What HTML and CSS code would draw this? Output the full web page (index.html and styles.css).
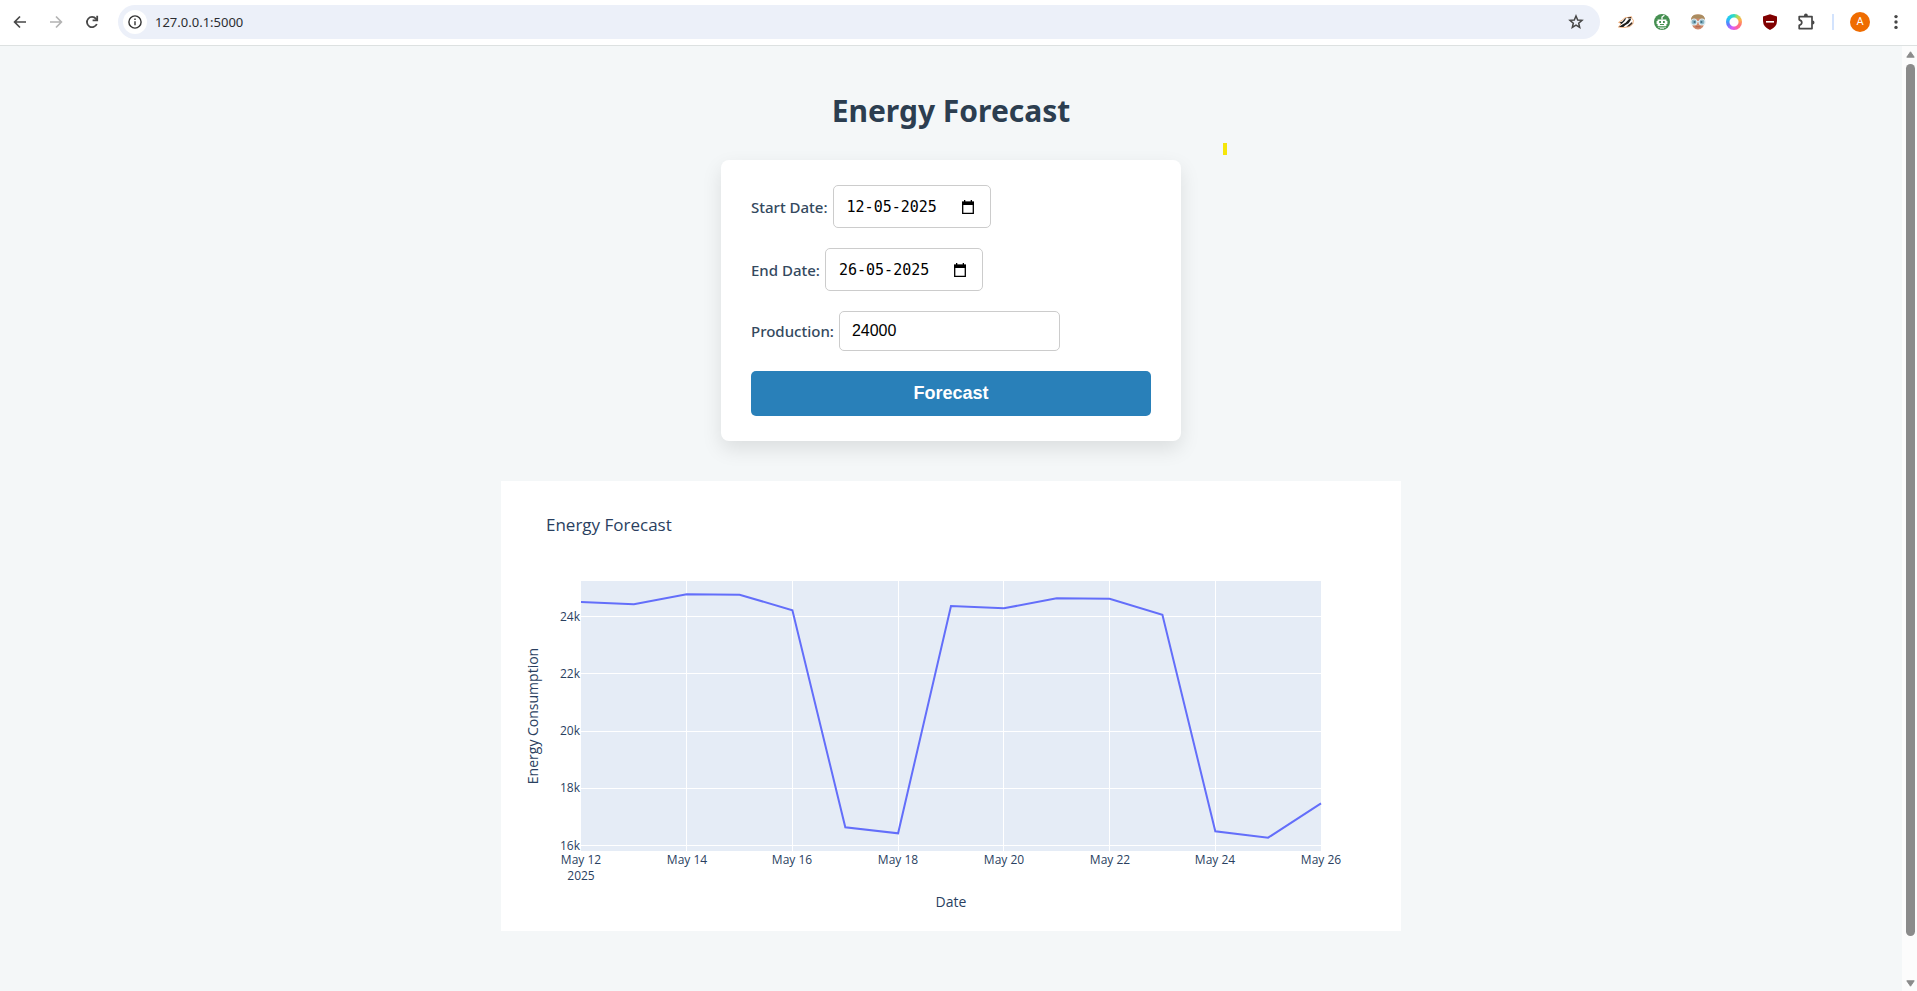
FILE: index.html
```html
<!DOCTYPE html>
<html lang="en">
<head>
<meta charset="utf-8">
<title>Energy Forecast</title>
<link rel="stylesheet" href="styles.css">
</head>
<body>
<header class="toolbar">
  <nav class="tools" aria-label="Navigation">
    <button class="tool" aria-label="Back"><svg width="16" height="16" viewBox="0 0 16 16" fill="none" stroke="#474747" stroke-width="1.7"><path d="M14 8H3M8 2.5L2.6 8L8 13.5"/></svg></button>
    <button class="tool" aria-label="Forward"><svg width="16" height="16" viewBox="0 0 16 16" fill="none" stroke="#b3b3b3" stroke-width="1.7"><path d="M2 8H13M8 2.5L13.4 8L8 13.5"/></svg></button>
    <button class="tool" aria-label="Reload"><svg width="16" height="16" viewBox="0 0 16 16" fill="none" stroke="#474747" stroke-width="1.8"><path d="M12.8 10A5.1 5.1 0 1 1 12 4.8L13 6"/><path d="M13.2 1.8V6.4H8.6"/></svg></button>
  </nav>
  <div class="omnibox">
    <button class="site-info" aria-label="Site information"><svg width="16" height="16" viewBox="0 0 16 16" fill="none" stroke="#333" stroke-width="1.4"><circle cx="8" cy="8" r="6.1"/><path d="M8 7.2V11.3M8 4.5V6"/></svg></button>
    <input class="address" type="text" value="127.0.0.1:5000" aria-label="Address">
    <button class="star" aria-label="Bookmark this page"><svg width="16" height="16" viewBox="0 0 16 16" fill="none" stroke="#474747" stroke-width="1.5"><path d="M8 2L9.7 6L14 6.3L10.7 9.2L11.7 13.5L8 11.2L4.3 13.5L5.3 9.2L2 6.3L6.3 6Z"/></svg></button>
  </div>
  <div class="tools">
    <button class="tool" aria-label="Privacy Badger"><svg width="16" height="16" viewBox="0 0 16 16"><path d="M.6 8.4L4.6 5.8L7.6 3.4L9.4 3.6L13.4 2.6L14 4.6L15.4 6.4L14.8 10L11.6 12.6L7 13.4L.4 13.2L3.4 9.4Z" fill="#fff" stroke="#f0a060" stroke-width=".8"/><path d="M1.6 8.6L4.4 7.4L7 4.4L8.4 4L6.6 7L3.6 10Z" fill="#1d1d1b"/><path d="M.8 12.9L4 10.8L7.6 8.8L10.6 5.6L12.4 4.6L13 5.8L10.6 9.2L7.2 11.2L5.4 13Z" fill="#1d1d1b"/><path d="M9 3.6L13 3L13.4 4.2L10.6 4.6ZM11 10.4L14 8L14.4 9.8L11.4 12.2L8.4 12.8Z" fill="#3a2a20"/></svg></button>
    <button class="tool" aria-label="Robot extension"><svg width="16" height="16" viewBox="0 0 16 16"><circle cx="8" cy="8" r="8" fill="#469052"/><path d="M8 5.6V3L10.4 1.2" fill="none" stroke="#fff" stroke-width="1.3"/><path d="M3.6 5.4H12.4V7H13.4V10H12.4V12H3.6V10H2.6V7H3.6Z" fill="#fff"/><path d="M5.2 7H7V9H5.2ZM9 7H10.8V9H9ZM6 10H10V11H6Z" fill="#469052"/><path d="M4 13.2H12M6 14.6H10" stroke="#d5ead8" stroke-width=".9"/></svg></button>
    <button class="tool" aria-label="Reader extension"><svg width="16" height="16" viewBox="0 0 16 16"><path d="M1 7Q1 0 8 .4Q15 0 15 7L13 13Q8 18 3 13Z" fill="#d0896a"/><path d="M1 6.3Q1 0 8 .4Q15 0 15 6.3L12 4.4H4Z" fill="#aa8c60"/><path d="M5.5 12.8H10.5" stroke="#a9604c" stroke-width="1"/><g fill="#8fb9c8" stroke="#dcebf1" stroke-width="1.2"><circle cx="4" cy="8" r="3"/><circle cx="12" cy="8" r="3"/></g><path d="M6.8 7.6H9.2" stroke="#dcebf1" stroke-width="1.2"/><circle cx="4.6" cy="8" r="1.1" fill="#3d6b80"/><circle cx="11.4" cy="8" r="1.1" fill="#3d6b80"/></svg></button>
    <button class="tool" aria-label="Color wheel extension"><span class="wheel"></span></button>
    <button class="tool" aria-label="Content blocker"><svg width="16" height="16" viewBox="0 0 16 16"><path d="M8 .3L15 2.5V7Q15 13 8 15.9Q1 13 1 7V2.5Z" fill="#800000"/><path d="M4 7.8H12" stroke="#fff" stroke-width="1.6"/></svg></button>
    <button class="tool" aria-label="Extensions"><svg width="18" height="18" viewBox="0 0 18 18"><path d="M2.2 3.6H15V15.6H2.2V12.4Q4.8 11.8 4.8 9.6Q4.8 7.4 2.2 6.8Z" fill="none" stroke="#474747" stroke-width="1.7" stroke-linejoin="round"/><path d="M7 3.2V2.4A1.9 1.9 0 0 1 10.8 2.4V3.2ZM15.2 7.6H15.6A1.9 1.9 0 0 1 15.6 11.4H15.2Z" fill="#474747"/></svg></button>
    <span class="divider"></span>
    <button class="tool" aria-label="Profile"><span class="avatar">A</span></button>
    <button class="tool" aria-label="Menu"><svg width="16" height="16" viewBox="0 0 16 16" fill="#474747"><circle cx="8" cy="2.6" r="1.7"/><circle cx="8" cy="8" r="1.7"/><circle cx="8" cy="13.4" r="1.7"/></svg></button>
  </div>
</header>
<div class="viewport">
  <main class="page">
    <h1 class="title">Energy Forecast</h1>
    <form class="card">
      <div class="field">
        <label for="start">Start Date:</label>
        <span class="date">
          <input id="start" type="text" value="12-05-2025">
          <button type="button" class="picker" aria-label="Pick start date"><svg width="14" height="14" viewBox="0 0 14 14"><path d="M1.7 2.5H12.3V13.3H1.7Z" fill="none" stroke="#000" stroke-width="1.3"/><path d="M1 1.5H13V5H1ZM3 0H4.3V2H3ZM9.7 0H11V2H9.7Z"/></svg></button>
        </span>
      </div>
      <div class="field">
        <label for="end">End Date:</label>
        <span class="date">
          <input id="end" type="text" value="26-05-2025">
          <button type="button" class="picker" aria-label="Pick end date"><svg width="14" height="14" viewBox="0 0 14 14"><path d="M1.7 2.5H12.3V13.3H1.7Z" fill="none" stroke="#000" stroke-width="1.3"/><path d="M1 1.5H13V5H1ZM3 0H4.3V2H3ZM9.7 0H11V2H9.7Z"/></svg></button>
        </span>
      </div>
      <div class="field">
        <label for="production">Production:</label>
        <input id="production" class="number" type="text" inputmode="numeric" value="24000">
      </div>
      <button type="button" class="submit">Forecast</button>
    </form>
    <section class="chart">
      <svg class="plot" viewBox="0 0 900 450" role="img" aria-label="Energy Forecast chart">
        <rect x="80" y="100" width="740" height="270" fill="#e5ecf6"/>
        <path class="grid" d="M185.5 100V370M291.5 100V370M397.5 100V370M502.5 100V370M608.5 100V370M714.5 100V370M80 135.5H820M80 192.5H820M80 250.5H820M80 307.5H820M80 364.5H820"/>
        <path class="series" d="M80 121L132.9 123.3L185.7 113.3L238.6 113.7L291.4 129.3L344.3 346.3L397.1 352.3L450 125L502.9 127.3L555.7 117.3L608.6 117.7L661.4 133.7L714.3 350.3L767.1 356.7L820 322.3"/>
        <text class="heading" x="45" y="50">Energy Forecast</text>
        <g class="tick end">
          <text x="79" y="140">24k</text>
          <text x="79" y="197">22k</text>
          <text x="79" y="254">20k</text>
          <text x="79" y="311">18k</text>
          <text x="79" y="369">16k</text>
        </g>
        <g class="tick middle">
          <text x="80" y="383">May 12</text>
          <text x="80" y="399">2025</text>
          <text x="186" y="383">May 14</text>
          <text x="291" y="383">May 16</text>
          <text x="397" y="383">May 18</text>
          <text x="503" y="383">May 20</text>
          <text x="609" y="383">May 22</text>
          <text x="714" y="383">May 24</text>
          <text x="820" y="383">May 26</text>
        </g>
        <text class="axis" x="450" y="426">Date</text>
        <text class="axis" transform="rotate(-90 37 235)" x="37" y="235">Energy Consumption</text>
      </svg>
    </section>
    <span class="marker"></span>
  </main>
  <div class="scrollbar" aria-hidden="true">
    <svg class="arrow" width="9" height="7" viewBox="0 0 9 7"><path d="M4.5 .8L8.2 6.2H.8Z"/></svg>
    <span class="thumb"></span>
    <span class="rest"></span>
    <svg class="arrow" width="9" height="7" viewBox="0 0 9 7"><path d="M4.5 6.2L.8 .8H8.2Z"/></svg>
  </div>
</div>
</body>
</html>
```
FILE: styles.css
```css
* {
  box-sizing: border-box;
}

body {
  margin: 0;
  min-height: 100vh;
  display: flex;
  flex-direction: column;
  background: #f4f7f8;
  font-family: "Noto Sans", "Open Sans", sans-serif;
}

button {
  padding: 0;
  border: 0;
  background: none;
}

input {
  margin: 0;
  padding: 0;
  border: 0;
  outline: 0;
  background: none;
}

.toolbar {
  display: flex;
  align-items: center;
  gap: 8px;
  padding: 5px 3px 6px 2px;
  background: #fff;
  border-bottom: 1px solid #dde1e1;
}

.tools {
  display: flex;
  align-items: center;
}

.tool {
  width: 36px;
  height: 34px;
  display: flex;
  align-items: center;
  justify-content: center;
}

.omnibox {
  flex: 1;
  display: flex;
  align-items: center;
  height: 34px;
  padding: 0 16px 0 5px;
  border-radius: 17px;
  background: #ecf0f9;
}

.site-info {
  width: 24px;
  height: 24px;
  display: flex;
  align-items: center;
  justify-content: center;
  border-radius: 50%;
  background: #fff;
}

.address {
  flex: 1;
  margin-left: 8px;
  font: 13px "Noto Sans", sans-serif;
  color: #2b2d31;
}

.star {
  display: flex;
}

.wheel {
  width: 16px;
  height: 16px;
  border-radius: 50%;
  background: radial-gradient(circle, #fff 4px, transparent 5px),
    conic-gradient(#2fdcc0, #a9dc5a 30deg, #ffb347 70deg, #ff7a70 110deg, #ff5fa8 155deg, #d65cff 200deg, #5b7cff 250deg, #22c7f5 300deg, #2fdcc0);
}

.divider {
  width: 2px;
  height: 16px;
  margin: 0 8px;
  background: #d3e3fd;
}

.avatar {
  width: 20px;
  height: 20px;
  border-radius: 50%;
  background: #ef6c00;
  color: #fff;
  font: 11px/20px Roboto, sans-serif;
  text-align: center;
}

.viewport {
  flex: 1;
  display: flex;
}

.page {
  position: relative;
  flex: 1;
  display: flex;
  flex-direction: column;
  align-items: center;
  padding: 43px 20px 40px;
}

.title {
  margin: 0 0 27px;
  font: 700 30px/44px "Noto Sans", sans-serif;
  color: #2c3e50;
}

.card {
  width: 100%;
  max-width: 460px;
  display: flex;
  flex-direction: column;
  gap: 20px;
  margin-bottom: 40px;
  padding: 25px 30px;
  border-radius: 8px;
  background: #fff;
  box-shadow: 0 8px 20px rgba(0, 0, 0, 0.1);
}

.field {
  display: flex;
  align-items: center;
  gap: 5px;
  font-size: 15px;
  font-weight: 500;
  color: #34495e;
}

.date {
  display: flex;
  align-items: center;
  justify-content: space-between;
  width: 158px;
  height: 43px;
  padding: 0 15px 0 13px;
  border: 1px solid #ccc;
  border-radius: 5px;
}

.date input {
  width: 96px;
  font: 15px "DejaVu Sans Mono", monospace;
  color: #000;
}

.picker {
  display: flex;
}

.number {
  width: 221px;
  height: 40px;
  padding: 0 12px;
  border: 1px solid #ccc;
  border-radius: 5px;
  font: 16px "Liberation Sans", sans-serif;
  color: #000;
}

.submit {
  height: 45px;
  border-radius: 5px;
  background: #2980b9;
  color: #fff;
  font: 700 18px "Liberation Sans", sans-serif;
}

.chart {
  width: 100%;
  max-width: 900px;
  background: #fff;
}

.plot {
  display: block;
  width: 100%;
  font-family: "Open Sans", sans-serif;
  fill: #2a3f5f;
}

.grid {
  stroke: #fff;
  stroke-width: 1;
}

.series {
  fill: none;
  stroke: #636efa;
  stroke-width: 2;
}

.heading {
  font-size: 17px;
}

.tick {
  font-size: 12px;
}

.end {
  text-anchor: end;
}

.middle {
  text-anchor: middle;
}

.axis {
  font-size: 14px;
  text-anchor: middle;
}

.marker {
  position: absolute;
  top: 97px;
  left: calc(50% + 272px);
  width: 4px;
  height: 12px;
  background: #f5e60a;
}

.scrollbar {
  display: flex;
  flex-direction: column;
  align-items: center;
  width: 15px;
  padding: 5px 0 4px 2px;
  background: #fcfcfc;
}

.arrow {
  fill: #8b8b8b;
  stroke: #8b8b8b;
  stroke-linejoin: round;
}

.thumb {
  flex: 872;
  width: 9px;
  margin-top: 6px;
  border-radius: 5px;
  background: #8b8b8b;
}

.rest {
  flex: 44;
}
```
